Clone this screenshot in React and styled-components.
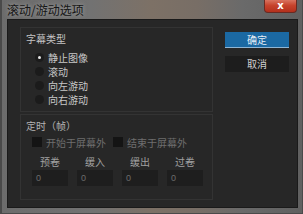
import React from "react";
import styled, { createGlobalStyle } from "styled-components";

const Global = createGlobalStyle`
  html, body { margin: 0; padding: 0; background: #5e5e5e; }
  body { font-family: "Noto Sans CJK SC", "Noto Sans", sans-serif; }
`;

const Window = styled.div`
  width: 303px;
  height: 214px;
  box-sizing: border-box;
  display: flex;
  flex-direction: column;
  padding: 0 5px 6px 7px;
  background: linear-gradient(90deg, #6c6c6c 0%, #727272 30%, #7d7166 50%, #786e66 65%, #6a6a6a 80%, #606060 100%);
  box-shadow: inset 2px 0 0 #4a4a4a, inset -1px 0 0 #4a4a4a, inset 0 -1px 0 #4a4a4a;
  position: relative;
`;

const TitleBar = styled.div`
  height: 19px;
  display: flex;
  align-items: center;
`;

const Title = styled.span`
  font-size: 12px;
  line-height: 12px;
  color: #151515;
  text-shadow: 0 0 4px rgba(220, 220, 220, 0.55);
`;

const CloseButton = styled.div`
  position: absolute;
  top: 0;
  left: 264px;
  width: 33px;
  height: 13px;
  box-sizing: border-box;
  border: 1px solid #6a2a22;
  border-top: none;
  border-radius: 0 0 4px 4px;
  background: linear-gradient(180deg, #d9735f 0%, #c7432c 45%, #b3301c 100%);
  color: #fff;
  font-family: "DejaVu Sans", sans-serif;
  font-weight: bold;
  font-size: 10px;
  line-height: 11px;
  text-align: center;
`;

const Body = styled.div`
  flex: 1;
  background: #272727;
  border: 1px solid #1a1a1a;
  display: flex;
  padding: 7px 0 0 12px;
  box-sizing: border-box;
`;

const LeftCol = styled.div`
  width: 193px;
  display: flex;
  flex-direction: column;
  gap: 2px;
`;

const Group = styled.div`
  border: 1px solid #333333;
  box-sizing: border-box;
  height: ${(p) => p.$h}px;
  padding: ${(p) => p.$pt}px 0 0 5px;
  display: flex;
  flex-direction: column;
`;

const GroupLabel = styled.div`
  font-size: 10px;
  line-height: 12px;
  color: ${(p) => (p.$dim ? "#b4b4b4" : "#c4c4c4")};
`;

const RadioList = styled.div`
  display: flex;
  flex-direction: column;
  margin-top: 5px;
  padding-left: 9px;
`;

const RadioRow = styled.div`
  display: flex;
  align-items: center;
  height: 14px;
  gap: 4px;
  font-size: 10px;
  color: #c8c8c8;
`;

const RadioDot = styled.span`
  width: 9px;
  height: 9px;
  border-radius: 50%;
  background: #1b1b1b;
  display: flex;
  align-items: center;
  justify-content: center;
  &::after {
    content: "";
    width: 3px;
    height: 3px;
    border-radius: 50%;
    background: ${(p) => (p.$on ? "#e8e8e8" : "transparent")};
  }
`;

const CheckRow = styled.div`
  display: flex;
  align-items: center;
  margin-top: 4px;
  padding-left: 6px;
  height: 12px;
`;

const CheckItem = styled.div`
  display: flex;
  align-items: center;
  gap: 4px;
  width: ${(p) => p.$w}px;
  font-size: 10px;
  color: #6e6e6e;
`;

const CheckBox = styled.span`
  width: 10px;
  height: 10px;
  background: #141414;
`;

const FieldGrid = styled.div`
  display: grid;
  grid-template-columns: repeat(4, 36px);
  column-gap: 9px;
  padding-left: 6px;
  margin-top: 8px;
`;

const FieldLabel = styled.div`
  font-size: 10px;
  line-height: 12px;
  color: #a0a0a0;
  text-align: center;
  margin-bottom: 2px;
`;

const FieldInput = styled.div`
  height: 16px;
  background: #1e1e1e;
  font-size: 9px;
  font-family: "Liberation Sans", sans-serif;
  color: #6c6c6c;
  line-height: 16px;
  padding-left: 4px;
`;

const Field = styled.div`
  display: flex;
  flex-direction: column;
`;

const RightCol = styled.div`
  margin-left: 12px;
  padding-top: 5px;
  display: flex;
  flex-direction: column;
  gap: 8px;
`;

const Button = styled.div`
  width: 64px;
  height: 15px;
  font-size: 10px;
  line-height: 15px;
  text-align: center;
  color: ${(p) => (p.$primary ? "#e4eef6" : "#cfcfcf")};
  background: ${(p) => (p.$primary ? "#1b69a3" : "#1d1d1d")};
  border-bottom: 1px solid ${(p) => (p.$primary ? "#8fb6d6" : "#1d1d1d")};
`;

export default function App() {
  const radios = ["静止图像", "滚动", "向左游动", "向右游动"];
  const fields = ["预卷", "缓入", "缓出", "过卷"];
  return (
    <>
      <Global />
      <Window>
        <TitleBar>
          <Title>滚动/游动选项</Title>
        </TitleBar>
        <CloseButton>x</CloseButton>
        <Body>
          <LeftCol>
            <Group $h={85} $pt={5}>
              <GroupLabel>字幕类型</GroupLabel>
              <RadioList>
                {radios.map((r, i) => (
                  <RadioRow key={r}>
                    <RadioDot $on={i === 0} />
                    {r}
                  </RadioRow>
                ))}
              </RadioList>
            </Group>
            <Group $h={86} $pt={5}>
              <GroupLabel $dim>定时（帧）</GroupLabel>
              <CheckRow>
                <CheckItem $w={81}>
                  <CheckBox />
                  开始于屏幕外
                </CheckItem>
                <CheckItem $w={90}>
                  <CheckBox />
                  结束于屏幕外
                </CheckItem>
              </CheckRow>
              <FieldGrid>
                {fields.map((f) => (
                  <Field key={f}>
                    <FieldLabel>{f}</FieldLabel>
                    <FieldInput>0</FieldInput>
                  </Field>
                ))}
              </FieldGrid>
            </Group>
          </LeftCol>
          <RightCol>
            <Button $primary>确定</Button>
            <Button>取消</Button>
          </RightCol>
        </Body>
      </Window>
    </>
  );
}
